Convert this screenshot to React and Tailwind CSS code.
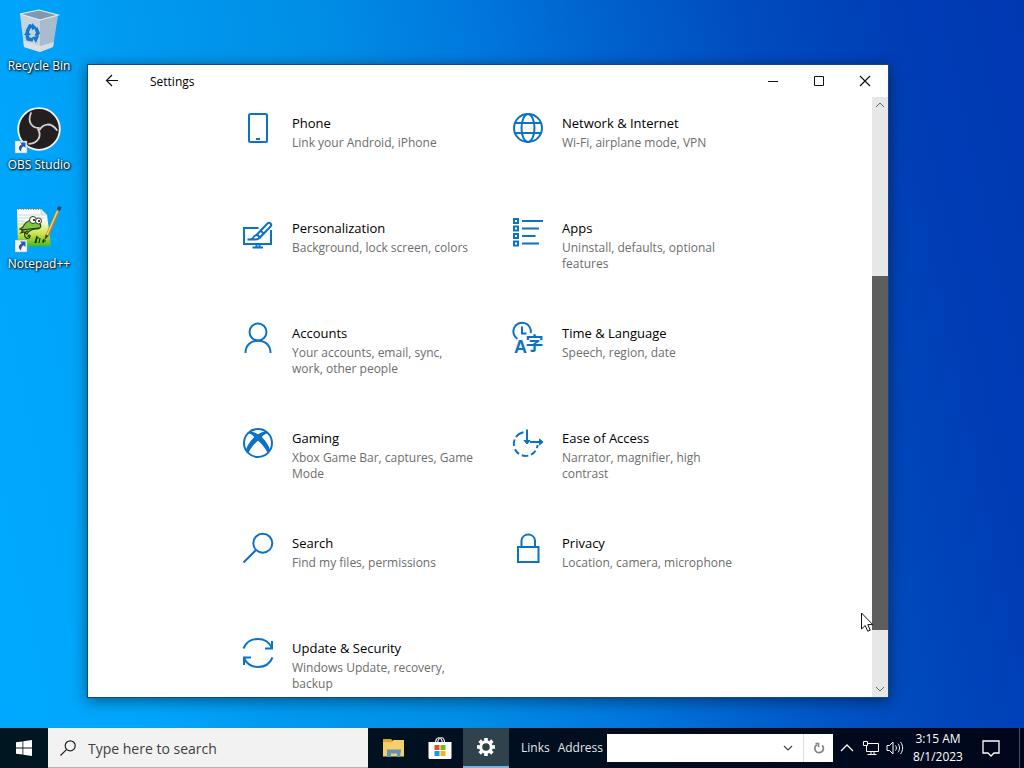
import React, { useState } from 'react'

const Icon = ({ children }) => (
  <svg className="w-8 h-8 shrink-0 overflow-visible" viewBox="0 0 32 32" fill="none" stroke="#0b72c5" strokeWidth="2" aria-hidden="true">
    {children}
  </svg>
)

const PhoneIcon = () => (
  <Icon>
    <rect x="7" y="2" width="18" height="28" rx="1.5" />
    <path d="M14 27h4" />
  </Icon>
)

const GlobeIcon = () => (
  <Icon>
    <circle cx="16" cy="16" r="14" />
    <ellipse cx="16" cy="16" rx="6.5" ry="14" />
    <path d="M3 11h26M3 21h26" />
  </Icon>
)

const PersonalizationIcon = () => (
  <Icon>
    <path d="M16.5 11H2v16h27V13M14.5 27v3.5M17.5 27v3.5M10.5 30.5h10.5" />
    <path d="M15 17.5L25.5 6.5a2.1 2.1 0 0 1 3 3L18 20.5z" />
    <path d="M15.5 18c-3 0-4 1.5-4.5 3-.3 1-1.5 1.500-5.500 1.500h7.500c3.500 0 5-1.500 4.700-3.500M18.500 13.500l3 3" />
  </Icon>
)

const AppsIcon = () => (
  <Icon>
    {[4, 11.5, 19, 26.5].map(y => (
      <rect key={y} x="2" y={y - 2} width="4" height="4" />
    ))}
    <path d="M10 4h21M10 11.5h17M10 19h13.5M10 26.5h17" />
  </Icon>
)

const AccountsIcon = () => (
  <Icon>
    <circle cx="16" cy="10" r="8.5" />
    <path d="M3.5 31c0-7.500 5-12.300 12.500-12.300S28.500 23.500 28.500 31" />
  </Icon>
)

const TimeIcon = () => (
  <Icon>
    <path d="M5.500 17A8.800 8.800 0 1 1 18.800 11M10 4.500v7h4.500" />
    <g fill="#0b72c5" stroke="none" fontWeight="bold">
      <text x="2" y="31" fontSize="18" fontFamily="Liberation Sans, sans-serif">A</text>
      <text x="13.500" y="28" fontSize="18" fontFamily="Noto Sans CJK SC, sans-serif">字</text>
    </g>
  </Icon>
)

const XboxIcon = () => (
  <Icon>
    <circle cx="16" cy="16" r="14" />
    <path fill="#0b72c5" stroke="none" d="M6 5.500c3.500-2 7.500 0 10 1.800C18.500 5.500 22.500 3.500 26 5.500l1.200 1.300c-2.700-1-5.200.7-7.400 3.200 4.200 4.300 7.900 9.500 8.200 14l-2.500 2.500C24.500 22.500 20 17.200 16 13.800c-4 3.400-8.500 8.700-9.500 12.700L4 24c.3-4.500 4-9.700 8.200-14C10 7.500 7.500 5.800 4.800 6.800z" />
  </Icon>
)

const EaseIcon = () => (
  <Icon>
    <path d="M11.500 5.200A12 12 0 0 0 4 10M2.600 12.500A12 12 0 0 0 2 19M3 22.200a12 12 0 0 0 4 4.700M9.800 28.300a12 12 0 0 0 6.500.3M19 27.700a12 12 0 0 0 4.500-4M24.800 21.200a12 12 0 0 0 .8-3.200" />
    <path d="M15 2.500v13M18 15h11" />
    <path fill="#0b72c5" strokeWidth="1" d="M12 13.500l3 3.500 3-3.500zM27.500 12l3.500 3-3.500 3z" />
  </Icon>
)

const SearchIcon = () => (
  <Icon>
    <circle cx="20.800" cy="11.200" r="9.500" />
    <path d="M1.500 30.500L14 18" />
  </Icon>
)

const LockIcon = () => (
  <Icon>
    <path d="M6 15h20.500v15H6zM9.500 15V8.500a6.800 6.800 0 0 1 13.500 0V15" />
  </Icon>
)

const UpdateIcon = () => (
  <Icon>
    <path d="M1.500 11.500C4 5.500 9.500 2 16 2s11.500 3.500 14 9M30 4v7.500h-7M30.500 20.500C28 26.500 22.500 30 16 30S4.500 26.500 2 21M2 28v-7.500h7" />
  </Icon>
)

const categories = [
  { title: 'Phone', text: 'Link your Android, iPhone', Glyph: PhoneIcon },
  { title: 'Network & Internet', text: 'Wi-Fi, airplane mode, VPN', Glyph: GlobeIcon },
  { title: 'Personalization', text: 'Background, lock screen, colors', Glyph: PersonalizationIcon },
  { title: 'Apps', text: 'Uninstall, defaults, optional features', Glyph: AppsIcon },
  { title: 'Accounts', text: 'Your accounts, email, sync, work, other people', Glyph: AccountsIcon },
  { title: 'Time & Language', text: 'Speech, region, date', Glyph: TimeIcon },
  { title: 'Gaming', text: 'Xbox Game Bar, captures, Game Mode', Glyph: XboxIcon },
  { title: 'Ease of Access', text: 'Narrator, magnifier, high contrast', Glyph: EaseIcon },
  { title: 'Search', text: 'Find my files, permissions', Glyph: SearchIcon },
  { title: 'Privacy', text: 'Location, camera, microphone', Glyph: LockIcon },
  { title: 'Update & Security', text: 'Windows Update, recovery, backup', Glyph: UpdateIcon },
]

const Shortcut = () => (
  <g>
    <path fill="#f4f6f8" stroke="#9aa7b5" strokeWidth=".5" d="M0 34h12v12H0z" />
    <path fill="#2458a8" d="M5 35.500h5.500V41l-1.800-1.800C6.500 40.500 6 42 6.300 44.500 3 42.500 3 39.500 6.800 37.300z" />
  </g>
)

const RecycleBin = () => (
  <svg className="w-12 h-12" viewBox="0 0 48 48" aria-hidden="true">
    <path fill="#c3d3e0" d="M5 6l4 33 16 5V11z" />
    <path fill="#a9bccd" d="M25 11l18-4-5 32-13 5z" />
    <path fill="#8299ad" stroke="#e6eef5" strokeWidth="1.200" d="M5 6l19-4 19 5-18 5z" />
    <path fill="#e2e3e6" d="M8.500 33l16.500 5 14-4-1 5-13 5-16-5z" opacity=".8" />
    <g fill="none" stroke="#1678c8" strokeWidth="3.500">
      <path d="M12 24l3-6 4 1M21 20l2 5-2 3M18 32l-5-1-1-4" />
    </g>
    <path fill="#1678c8" d="M17 15l5 5-5 2zM24 28l-7 1 4 6zM9 27l3-5 4 5z" />
  </svg>
)

const ObsLogo = () => (
  <svg className="w-12 h-12" viewBox="0 0 48 48" aria-hidden="true">
    <circle cx="24" cy="22" r="20.800" fill="#231f20" stroke="#f5f8fa" strokeWidth="1.800" />
    <g fill="none" stroke="#d3d2d5" strokeWidth="1.800" strokeLinecap="round">
      {[0, 120, 240].map(a => (
        <path key={a} transform={`rotate(${a} 24 22)`} d="M24 21C17 21 12 15 16 6" />
      ))}
    </g>
    <Shortcut />
  </svg>
)

const NotepadLogo = () => (
  <svg className="w-12 h-12" viewBox="0 0 48 48" aria-hidden="true">
    <defs>
      <linearGradient id="page" x1="0" y1="0" x2="0" y2="1">
        <stop offset=".3" stopColor="#fbfdf8" />
        <stop offset=".65" stopColor="#cbe647" />
        <stop offset="1" stopColor="#40b51c" />
      </linearGradient>
    </defs>
    <path fill="url(#page)" d="M2 3h24l6 6 4 31-33 1z" />
    <path fill="#e8ecef" stroke="#b5c0c9" strokeWidth=".6" d="M26 3v6h6z" />
    <path stroke="#b6c7d6" strokeWidth=".7" d="M3 9h22M3 12h27M3 15h7M3 18h6" />
    <path fill="none" stroke="#6b7780" strokeWidth="1.400" strokeDasharray="1 1.500" d="M3 3h23" />
    <path fill="#83c440" stroke="#24401a" strokeWidth="1.200" d="M8 21c3-7 9-8 14-5 5 2 5 6 0 7-5 0-8 1-10 5l-3-2-3 1 2-3-3-1z" />
    <circle cx="18" cy="14" r="3.500" fill="#fff" stroke="#24401a" />
    <circle cx="23.500" cy="15" r="3" fill="#fff" stroke="#24401a" />
    <circle cx="19" cy="14" r="1" />
    <circle cx="24" cy="15" r="1" />
    <path fill="none" stroke="#1c3012" strokeWidth="1.200" d="M6 24l18-2M13 25c-6 1-3 9 1 7 3-3-1-4-1-1M20 37l2-7-1 7M21 32h3M25 32l-1 5M29 33l-1 4M27 35h4" />
    <path stroke="#c97e19" strokeWidth="3.200" d="M32 30L43 5" />
    <path stroke="#ffd24d" strokeWidth="1.500" d="M32 29L42.500 5" />
    <path fill="#3b3b64" d="M42 3l1.500-3 3 1.300L45 5z" />
    <path fill="#513714" d="M30.500 28.500l3 1.400-4 4z" />
    <Shortcut />
  </svg>
)

const shortcuts = [
  { name: 'Recycle Bin', Logo: RecycleBin },
  { name: 'OBS Studio', Logo: ObsLogo },
  { name: 'Notepad++', Logo: NotepadLogo },
]

function DesktopIcons() {
  return (
    <nav className="flex flex-col w-20 pt-2" aria-label="Desktop">
      {shortcuts.map(({ name, Logo }) => (
        <button key={name} className="flex flex-col items-center h-[99px] pr-0.5 text-xs leading-4 text-white whitespace-nowrap [text-shadow:1px_1px_2px_#000,0_0_3px_#000]">
          <Logo />
          <span className="mt-0.5">{name}</span>
        </button>
      ))}
    </nav>
  )
}

function TitleBar() {
  return (
    <header className="flex items-center h-8 shrink-0 text-black">
      <button className="flex items-center justify-center w-12 h-8" aria-label="Back">
        <svg className="w-4 h-4" viewBox="0 0 16 16" fill="none" stroke="#111" strokeWidth="1.200">
          <path d="M14 7.500H2.500M8 2L2.500 7.500 8 13" />
        </svg>
      </button>
      <h1 className="flex-1 pl-3.5 pt-0.5 text-xs">Settings</h1>
      <button className="flex items-center justify-center w-[46px] h-8" aria-label="Minimize">
        <svg className="w-3 h-3" viewBox="0 0 12 12" stroke="#111"><path d="M1 6.500h10" /></svg>
      </button>
      <button className="flex items-center justify-center w-[46px] h-8" aria-label="Maximize">
        <svg className="w-3 h-3" viewBox="0 0 12 12" fill="none" stroke="#111"><path d="M1.500 1.500h9v9h-9z" /></svg>
      </button>
      <button className="flex items-center justify-center w-[46px] h-8" aria-label="Close">
        <svg className="w-3 h-3" viewBox="0 0 12 12" stroke="#111" strokeWidth="1.200"><path d="M1 1l10 10M11 1L1 11" /></svg>
      </button>
    </header>
  )
}

function ScrollBar() {
  return (
    <div className="flex flex-col w-4 shrink-0 bg-[#e6e7e7]">
      <button className="flex items-center justify-center h-4" aria-label="Scroll up">
        <svg className="w-2.5 h-2.5" viewBox="0 0 10 10" fill="none" stroke="#606060"><path d="M1 7l4-4 4 4" /></svg>
      </button>
      <div className="grow-[163]" />
      <div className="grow-[354] bg-[#5e5e5e]" />
      <div className="grow-[51]" />
      <button className="flex items-center justify-center h-4" aria-label="Scroll down">
        <svg className="w-2.5 h-2.5" viewBox="0 0 10 10" fill="none" stroke="#606060"><path d="M1 3l4 4 4-4" /></svg>
      </button>
    </div>
  )
}

function SettingsWindow() {
  return (
    <section className="absolute left-[87px] top-16 flex flex-col w-[802px] h-[634px] bg-white border border-[#164a78] shadow-[0_3px_14px_rgba(0,0,0,0.45)]">
      <TitleBar />
      <div className="flex flex-1 min-h-0">
        <main className="flex-1 overflow-hidden">
          <div className="grid grid-cols-[270px_232px] auto-rows-[105px] pl-[154px] pt-[15px]">
            {categories.map(({ title, text, Glyph }) => (
              <a key={title} href="#" className="flex items-start gap-[18px]">
                <Glyph />
                <span className="flex flex-col w-[182px] gap-px">
                  <span className="text-[13px] leading-[22px] text-black">{title}</span>
                  <span className="text-xs leading-4 text-[#6d6d6d]">{text}</span>
                </span>
              </a>
            ))}
          </div>
        </main>
        <ScrollBar />
      </div>
    </section>
  )
}

function Taskbar() {
  const [query, setQuery] = useState('')
  const [address, setAddress] = useState('')

  return (
    <footer className="flex items-center h-10 shrink-0 bg-linear-to-r from-[#001722] to-[#00071c] text-xs text-white">
      <button className="flex items-center justify-center w-12 h-10 shrink-0" aria-label="Start">
        <svg className="w-4 h-4" viewBox="0 0 16 16" fill="#fff">
          <path d="M0 2.300l6.500-.9v6.200H0zM7.300 1.300L16 0v7.600H7.300zM0 8.400h6.500v6.200L0 13.700zM7.300 8.400H16V16l-8.700-1.300z" />
        </svg>
      </button>
      <label className="flex items-center w-80 h-10 shrink-0 pl-3 gap-3 bg-[#f2f2f2] border-b border-[#b4b4b4]">
        <svg className="w-4 h-4" viewBox="0 0 16 16" fill="none" stroke="#222" strokeWidth="1.200" aria-hidden="true">
          <circle cx="10.200" cy="5.800" r="5" />
          <path d="M6.700 9.300L.5 15.500" />
        </svg>
        <input
          className="flex-1 min-w-0 pt-0.5 text-sm text-[#333] placeholder:text-[#404040] outline-none"
          value={query}
          onChange={(e) => setQuery(e.target.value)}
          placeholder="Type here to search"
          aria-label="Search"
        />
      </label>
      <div className="flex shrink-0 pl-[3px]">
        <button className="flex items-center justify-center w-[46px] h-10" aria-label="File Explorer">
          <svg className="w-6 h-6" viewBox="0 0 24 24">
            <path fill="#e2a52b" d="M1 3h8l2 2h11v4H1z" />
            <path fill="#f7cf68" d="M1 6h9l1.500-2H22v16.500H1z" />
            <path fill="#5a96bd" d="M5 13.500h14l-1 7.500h-3v-3.500H9V21H5z" />
          </svg>
        </button>
        <button className="flex items-center justify-center w-[46px] h-10" aria-label="Microsoft Store">
          <svg className="w-6 h-6" viewBox="0 0 24 24">
            <path fill="none" stroke="#e8edf0" strokeWidth="1.200" d="M7.500 7c0-7 6-7 7 0M9.500 7c1-7 7-7 7 0" />
            <path fill="#fff" d="M.5 6h23v15.500c0 1-.8 1.500-1.500 1.500H2c-1 0-1.500-.7-1.500-1.500z" />
            <path fill="#e84f28" d="M6.500 9h5v5h-5z" />
            <path fill="#79b51c" d="M12.500 9h5v5h-5z" />
            <path fill="#199bdc" d="M6.500 15h5v5h-5z" />
            <path fill="#f5b31b" d="M12.500 15h5v5h-5z" />
          </svg>
        </button>
        <button className="flex items-center justify-center w-[46px] h-10 bg-[#30424c] border-b-2 border-[#76b5e6]" aria-label="Settings">
          <svg className="w-5 h-5" viewBox="0 0 20 20" fill="none" stroke="#fff">
            <circle cx="10" cy="10" r="5.300" strokeWidth="3" />
            {[0, 45, 90, 135, 180, 225, 270, 315].map(a => (
              <path key={a} strokeWidth="3.600" transform={`rotate(${a} 10 10)`} d="M10 1v3" />
            ))}
          </svg>
        </button>
      </div>
      <span className="pl-3 text-[#e4e8eb]">Links</span>
      <label htmlFor="address" className="pl-2 pr-1 text-[#e4e8eb]">Address</label>
      <div className="flex items-center flex-1 min-w-0 h-7 bg-white">
        <input
          id="address"
          className="flex-1 min-w-0 h-7 px-1 text-black outline-none"
          value={address}
          onChange={(e) => setAddress(e.target.value)}
        />
        <button className="flex items-center justify-center w-[30px] h-7" aria-label="Previous locations">
          <svg className="w-2.5 h-2.5" viewBox="0 0 10 10" fill="none" stroke="#444" strokeWidth="1.200"><path d="M1 3l4 4 4-4" /></svg>
        </button>
        <button className="flex items-center justify-center w-[30px] h-7 border-l border-[#dedede]" aria-label="Refresh">
          <svg className="w-3 h-3" viewBox="0 0 12 12" fill="none" stroke="#858585" strokeWidth="1.700">
            <path d="M9.200 3.400a4.300 4.300 0 1 1-5.400-.6M2.500 1.500h3V5" />
          </svg>
        </button>
      </div>
      <button className="flex items-center justify-center w-7 h-10 shrink-0" aria-label="Show hidden icons">
        <svg className="w-3.5 h-3.5" viewBox="0 0 14 14" fill="none" stroke="#fff" strokeWidth="1.300"><path d="M1 10l6-6 6 6" /></svg>
      </button>
      <button className="flex items-center justify-center w-5 h-10 shrink-0" aria-label="Network">
        <svg className="w-4 h-4" viewBox="0 0 16 16" fill="none" stroke="#fff">
          <path d="M5 3.500h10.500v8H3.500V6M.5 1.500h4v4h-4zM8 11.500v3M11 11.500v3M4.500 14.500h9" />
        </svg>
      </button>
      <button className="flex items-center justify-center w-7 h-10 shrink-0" aria-label="Volume">
        <svg className="w-[18px] h-4" viewBox="0 0 18 16" fill="none" stroke="#fff">
          <path d="M1 5.500h2.500L7 2v12l-3.500-3.500H1zM9.500 5.500c1.200 1.500 1.200 3.500 0 5M12 3.700c2 2.500 2 6 0 8.600M14.500 2c2.800 3.500 2.800 8.500 0 12" />
        </svg>
      </button>
      <button className="w-[58px] shrink-0 text-center leading-[18px]">
        3:15 AM<br />8/1/2023
      </button>
      <button className="flex items-center justify-center w-12 h-10 shrink-0" aria-label="Notifications">
        <svg className="w-[18px] h-[18px]" viewBox="0 0 18 18" fill="none" stroke="#fff" strokeWidth="1.300">
          <path d="M1 2h16v12h-5l-3 3-3-3H1z" />
        </svg>
      </button>
      <button className="w-[9px] h-10 shrink-0 bg-linear-to-r from-transparent from-50% via-[#46505f] via-50% to-transparent to-60%" aria-label="Show desktop" />
    </footer>
  )
}

export default function App() {
  return (
    <div className="relative flex flex-col h-screen overflow-hidden font-['Open_Sans','Noto_Sans',sans-serif] bg-[linear-gradient(78deg,#00a9ff_0%,#00a5fb_14%,#009af0_24%,#008ee6_40%,#0076dc_54%,#0066d0_62%,#004cbf_76%,#003eb6_88%,#0038b2_100%)]">
      <div className="flex-1 min-h-0">
        <DesktopIcons />
      </div>
      <SettingsWindow />
      <Taskbar />
      <svg className="absolute left-[860px] top-[612px] w-4 h-5" viewBox="0 0 16 20" fill="#fff" stroke="#111" aria-hidden="true">
        <path d="M1.500 1v16l3.700-3.500 2.500 5.700 2.500-1-2.400-5.600h5z" />
      </svg>
    </div>
  )
}
